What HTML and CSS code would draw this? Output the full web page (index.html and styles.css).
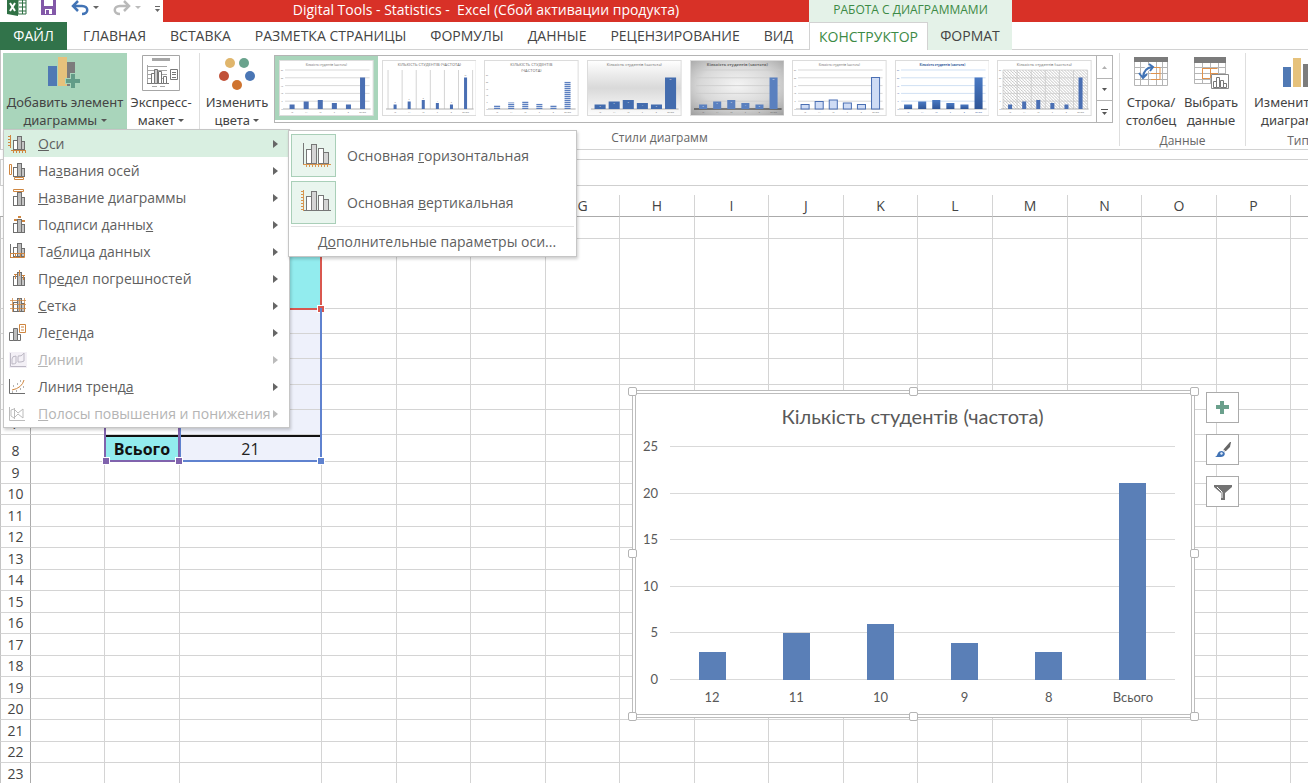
FILE: index.html
```html
<!DOCTYPE html>
<html lang="ru">
<head>
<meta charset="utf-8">
<title>Digital Tools - Statistics - Excel</title>
<link rel="stylesheet" href="styles.css">
</head>
<body>
<svg class="defs" width="0" height="0" aria-hidden="true">
  <defs>
    <g id="mini-bars">
      <rect x="6.5" y="5.5" width="4" height="9" fill="#fff" stroke="#6e6e6e"/>
      <rect x="14.5" y="6.5" width="3" height="8" fill="#c4c4c4" stroke="#6e6e6e"/>
      <rect x="10.5" y="1.500" width="4" height="13" fill="#bdbdbd" stroke="#6e6e6e"/>
    </g>
    <g id="axis-bars">
      <rect x="9.500" y="10.500" width="5" height="14" fill="#fff" stroke="#777"/>
      <rect x="14.500" y="5.500" width="5" height="19" fill="#d5d5d5" stroke="#777"/>
      <rect x="21.500" y="9.500" width="5" height="15" fill="#fff" stroke="#777"/>
      <rect x="26.500" y="13.500" width="5" height="11" fill="#d5d5d5" stroke="#777"/>
    </g>
    <linearGradient id="g-soft" x1="0" y1="0" x2="0" y2="1"><stop offset="0" stop-color="#fff"/><stop offset=".5" stop-color="#d9d9d9"/><stop offset="1" stop-color="#fdfdfd"/></linearGradient>
    <radialGradient id="g-dark" cx=".5" cy=".45" r=".8"><stop offset="0" stop-color="#f4f4f4"/><stop offset=".5" stop-color="#d8d8d8"/><stop offset="1" stop-color="#949494"/></radialGradient>
    <linearGradient id="g-bar" x1="0" y1="0" x2="0" y2="1"><stop offset="0" stop-color="#4a7ac4"/><stop offset="1" stop-color="#2f5597"/></linearGradient>
    <pattern id="p-stripe" width="4" height="2" patternUnits="userSpaceOnUse"><rect width="4" height="2" fill="#fff"/><rect width="4" height="1.300" fill="#5b7fc0"/></pattern>
    <pattern id="p-hatch" width="3" height="3" patternUnits="userSpaceOnUse"><path d="M0 0L3 3" stroke="#b2b2b2" stroke-width=".7"/></pattern>
  </defs>
</svg>

<div class="app">
  <header class="titlebar">
    <div class="quick">
      <svg class="quick-excel" viewBox="0 0 20 16" width="20" height="16" aria-hidden="true">
        <path d="M11 0h8v14h-8z" fill="#fff" stroke="#2f7044"/>
        <path d="M12 3h7M12 7h7M12 11h7M15.500 0v14" stroke="#2f7044"/>
        <path d="M0 0h11v16L0 14z" fill="#2f7044"/>
        <path d="M3 3l5 8M8 3l-5 8" stroke="#fff" stroke-width="2"/>
      </svg>
      <button class="quick-save" aria-label="Сохранить">
        <svg viewBox="0 0 15 15" width="15" height="15"><path d="M0 0h15v15H0z" fill="#8258a8"/><path d="M3 0h9v6H3zM4 9h7v5H4z" fill="#fff"/><path d="M5 10h3v4H5z" fill="#8258a8"/></svg>
      </button>
      <button class="quick-undo" aria-label="Отменить">
        <svg viewBox="0 0 28 16" width="28" height="16"><path d="M2 6h9c7 0 7 8 0 8" fill="none" stroke="#4173b5" stroke-width="2.500"/><path d="M7 1L2 6l5 5" fill="none" stroke="#4173b5" stroke-width="2.500"/><path d="M22 6h6l-3 3z" fill="#666"/></svg>
      </button>
      <button class="quick-redo" aria-label="Повторить">
        <svg viewBox="0 0 28 16" width="28" height="16"><path d="M16 6H7c-7 0-7 8 0 8" fill="none" stroke="#b9b9b9" stroke-width="2.500"/><path d="M11 1l5 5-5 5" fill="none" stroke="#b9b9b9" stroke-width="2.500"/><path d="M22 6h6l-3 3z" fill="#bbb"/></svg>
      </button>
      <button class="quick-more" aria-label="Настройка панели">
        <svg viewBox="0 0 5 6" width="5" height="6"><path d="M0 .5h5" stroke="#666"/><path d="M0 3h5L2.500 6z" fill="#666"/></svg>
      </button>
    </div>
    <div class="caption">Digital Tools - Statistics -&nbsp; Excel (Сбой активации продукта)</div>
    <div class="context-title">РАБОТА С ДИАГРАММАМИ</div>
    <div class="caption-rest"></div>
  </header>

  <nav class="tabs">
    <button class="tab-file">ФАЙЛ</button>
    <div class="tabs-main">
      <button class="tab">ГЛАВНАЯ</button>
      <button class="tab">ВСТАВКА</button>
      <button class="tab">РАЗМЕТКА СТРАНИЦЫ</button>
      <button class="tab">ФОРМУЛЫ</button>
      <button class="tab">ДАННЫЕ</button>
      <button class="tab">РЕЦЕНЗИРОВАНИЕ</button>
      <button class="tab">ВИД</button>
    </div>
    <div class="tabs-context">
      <button class="tab tab-active">КОНСТРУКТОР</button>
      <button class="tab">ФОРМАТ</button>
    </div>
  </nav>

  <section class="ribbon">
    <div class="group group-layout">
      <div class="dropdown">
        <button class="tool tool-open" aria-expanded="true">
          <svg viewBox="0 0 34 34" width="34" height="34"><path d="M0 10h9v20H0z" fill="#5079b4"/><path d="M10 1h9v29h-9z" fill="#e6c27c"/><path d="M19 6h8v24h-8z" fill="#7c7c7c"/><path d="M22 17h6v5h5v6h-5v5h-6v-5h-5v-6h5z" fill="#a9d5bb"/><path d="M23 18h4v5h5v4h-5v5h-4v-5h-5v-4h5z" fill="#639c88"/></svg>
          <span>Добавить элемент</span><span>диаграммы <i class="caret"></i></span>
        </button>
        <ul class="menu">
          <li><button class="menu-item menu-item-on"><svg viewBox="0 0 20 18" width="20" height="18"><use href="#mini-bars"/><path d="M3.500 0v13M1 1.500h2M1 4.500h2M1 7.500h2M1 10.500h2M4 15.500h15M6.500 15v3M9.500 15v3M12.500 15v3M15.500 15v3M18.500 15v3" stroke="#cf8640" fill="none"/></svg><span><u>О</u>си</span></button></li>
          <li><button class="menu-item"><svg viewBox="0 0 20 18" width="20" height="18"><use href="#mini-bars"/><path d="M2.500 2.500h2v10h-2zM7.500 15.500h9v2h-9z" stroke="#cf8640" fill="#fff"/></svg><span>На<u>з</u>вания осей</span></button></li>
          <li><button class="menu-item"><svg viewBox="0 0 20 18" width="20" height="18"><use href="#mini-bars" y="2"/><path d="M6.500.5h10v2h-10z" stroke="#cf8640" fill="#fff"/></svg><span><u>Н</u>азвание диаграммы</span></button></li>
          <li><button class="menu-item"><svg viewBox="0 0 20 18" width="20" height="18"><use href="#mini-bars" y="2"/><path d="M7 4h3M11 1h3M15 5h3" stroke="#cf8640" stroke-width="2"/></svg><span>Подписи данны<u>х</u></span></button></li>
          <li><button class="menu-item"><svg viewBox="0 0 20 18" width="20" height="18"><use href="#mini-bars" y="-1"/><path d="M3.500 1v14" stroke="#6e6e6e"/><path d="M3.500 10.500h14v4h-14zM8.500 10v4M13.500 10v4" stroke="#cf8640" fill="none"/></svg><span>Та<u>б</u>лица данных</span></button></li>
          <li><button class="menu-item"><svg viewBox="0 0 20 18" width="20" height="18"><use href="#mini-bars" y="1"/><path d="M8.500 4v5M12.500 0v6M16.500 5v5M7 4.500h3M15 5.500h3" stroke="#cf8640"/></svg><span>Пр<u>е</u>дел погрешностей</span></button></li>
          <li><button class="menu-item"><svg viewBox="0 0 20 18" width="20" height="18"><use href="#mini-bars"/><path d="M3 3.500h16M3 7.500h16M3 11.500h16M5.500 1v14M12.500 1v14M17.500 1v14" stroke="#cf8640" stroke-opacity=".75"/></svg><span><u>С</u>етка</span></button></li>
          <li><button class="menu-item"><svg viewBox="0 0 20 18" width="20" height="18"><path d="M2.500 8.500h4v8h-4zM10.500 10.500h3v6h-3z" fill="#fff" stroke="#6e6e6e"/><path d="M6.500 4.500h4v12h-4z" fill="#bdbdbd" stroke="#6e6e6e"/><path d="M12.500.5h6v8h-6zM14 3h3M14 6h3" fill="#fff" stroke="#cf8640"/></svg><span>Ле<u>г</u>енда</span></button></li>
          <li><button class="menu-item" disabled><svg viewBox="0 0 20 18" width="20" height="18"><path d="M2 1h18v16H2z" fill="#f3f0f6"/><path d="M3.500 2v13.500H19M5 13V8q0-3 4-3v7q-1 1-4 1M11 11V6q0-2 2-1 2 0 4-3v8q-2 1-4 1z" stroke="#bcb8c4" fill="none"/></svg><span><u>Л</u>инии</span></button></li>
          <li><button class="menu-item"><svg viewBox="0 0 20 18" width="20" height="18"><path d="M2.500 1v14.500H18" stroke="#6e6e6e" fill="none"/><path d="M5 12q10-2 12-10" stroke="#cf8640" fill="none"/><path d="M6 8h1M10 6h1M9 13h1M13 11h1M16 9h1M13 3h1M5 14h1" stroke="#666"/></svg><span>Линия тренд<u>а</u></span></button></li>
          <li><button class="menu-item" disabled><svg viewBox="0 0 20 18" width="20" height="18"><path d="M2.500 2v13.500H18M4 5l3-1 4 4 5-4v9l-5-4-4 4-3-2zM7.500 3v11" stroke="#bcbcbc" fill="none"/></svg><span><u>П</u>олосы повышения и понижения</span></button></li>
        </ul>
        <div class="submenu">
          <button class="sub-item"><span class="sub-icon"><svg viewBox="0 0 34 34" width="34" height="34"><use href="#axis-bars"/><path d="M6.500 4v21" stroke="#777"/><path d="M6 25.500h28M9.500 26v2M12.500 26v2M15.500 26v2M18.500 26v2M21.500 26v2M24.500 26v2M27.500 26v2M30.500 26v2" stroke="#d8954f"/></svg></span><span>Основная <u>г</u>оризонтальная</span></button>
          <button class="sub-item"><span class="sub-icon"><svg viewBox="0 0 34 34" width="34" height="34"><use href="#axis-bars"/><path d="M7 24.500h27" stroke="#777"/><path d="M6.500 4v21M4 5.500h2M4 8.500h2M4 11.500h2M4 14.500h2M4 17.500h2M4 20.500h2M4 23.500h2" stroke="#d8954f"/></svg></span><span>Основная <u>в</u>ертикальная</span></button>
          <button class="sub-more">Д<u>о</u>полнительные параметры оси...</button>
        </div>
      </div>
      <button class="tool tool-express">
        <svg viewBox="0 0 38 36" width="38" height="36"><path d="M.5.5h37v35H.5z" fill="#fff" stroke="#a6a6a6"/><path d="M10 4.500h18" stroke="#a6a6a6" stroke-width="3"/><path d="M6 11.500h19M6 15.500h19M6 19.500h19M6 23.500h19M5.500 10v19M10 31.500h5M18 31.500h5" stroke="#a6a6a6"/><path d="M5 28.500h22" stroke="#777"/><path d="M9.500 18.500h3v10h-3zM16.500 16.500h3v12h-3zM21.500 21.500h3v7h-3z" fill="#fff" stroke="#777"/><path d="M12.500 14.500h3v14h-3z" fill="#ccc" stroke="#777"/><path d="M28.500 14.500h7v10h-7zM30 17.500h4M30 19.500h4M30 22.500h4" fill="#fff" stroke="#777"/></svg>
        <span>Экспресс-</span><span>макет <i class="caret"></i></span>
      </button>
    </div>
    <div class="group group-styles">
      <div class="styles-row">
        <button class="tool tool-colors">
          <svg viewBox="0 0 36 34" width="36" height="34"><circle cx="11" cy="7" r="5" fill="#e0b66c"/><circle cx="25" cy="7" r="5" fill="#6aa38d"/><circle cx="5" cy="20" r="5" fill="#c15138"/><circle cx="31" cy="20" r="5" fill="#4a76b5"/><circle cx="18" cy="29" r="5" fill="#cf7430"/></svg>
          <span>Изменить</span><span>цвета <i class="caret"></i></span>
        </button>
        <div class="gallery">
          <div class="gallery-list" id="gallery"></div>
          <div class="gallery-nav">
            <button aria-label="Вверх"><svg viewBox="0 0 5 3" width="5" height="3"><path d="M0 3h5L2.500 0z" fill="#b0b0b0"/></svg></button>
            <button aria-label="Вниз"><svg viewBox="0 0 5 3" width="5" height="3"><path d="M0 0h5L2.500 3z" fill="#555"/></svg></button>
            <button aria-label="Все стили"><svg viewBox="0 0 7 6" width="7" height="6"><path d="M0 .5h7" stroke="#555"/><path d="M1 3h5L3.500 6z" fill="#555"/></svg></button>
          </div>
        </div>
      </div>
      <div class="group-label">Стили диаграмм</div>
    </div>
    <div class="group group-data">
      <div class="group-tools">
        <button class="tool">
          <svg viewBox="0 0 36 34" width="36" height="34"><path d="M1.500 3.500h33v26h-33zM1 11.500h34M1 17.500h34M1 23.500h34M7.500 5v25M15.500 5v25M23.500 5v25M29.500 5v25" fill="#fff" stroke="#b5b5b5"/><path d="M1 1h34v5H1z" fill="#7b7b7b"/><path d="M18 11.500h9v12h-9M18 17.500h9" fill="none" stroke="#e0924c"/><path d="M10 21q1-9 9-10" fill="none" stroke="#fff" stroke-width="5"/><path d="M10 21q1-9 9-10M16 8l4 3-3 4M6 17l4 5 4-4" fill="none" stroke="#4173b5" stroke-width="2"/></svg>
          <span>Строка/</span><span>столбец</span>
        </button>
        <button class="tool">
          <svg viewBox="0 0 36 34" width="36" height="34"><path d="M1.500 3.500h31v24h-31zM1 11.500h31M1 17.500h31M1 23.500h31M9.500 5v23M17.500 5v23M25.500 5v23" fill="#fff" stroke="#b5b5b5"/><path d="M1 1h32v6H1z" fill="#7b7b7b"/><path d="M9.500 12.500h15M9.500 12v11M17.500 12v10M9 22.500h8M17 17.500h8" fill="none" stroke="#e0924c"/><path d="M18.500 18.500h17v14h-17z" fill="#fff" stroke="#8a8a8a"/><path d="M20.500 25.500h3v6h-3zM23.500 21.500h3v10h-3zM27.500 24.500h3v7h-3zM30.500 27.500h3v4h-3z" fill="#fff" stroke="#777"/></svg>
          <span>Выбрать</span><span>данные</span>
        </button>
      </div>
      <div class="group-label">Данные</div>
    </div>
    <div class="group group-type">
      <div class="type-inner">
        <button class="tool">
          <svg viewBox="0 0 36 34" width="36" height="34"><path d="M3 11h8v20H3z" fill="#5079b4"/><path d="M13 2h8v29h-8z" fill="#e6c27c"/><path d="M23 8h8v23h-8z" fill="#7c7c7c"/></svg>
          <span>Изменить тип</span><span>диаграммы</span>
        </button>
        <div class="group-label">Тип</div>
      </div>
    </div>
  </section>

  <div class="formula-bar"></div>

  <main class="sheet">
    <table class="grid" id="grid"></table>
    <div class="range range-header"><i class="knob knob-se"></i></div>
    <div class="range range-values"><i class="knob knob-se"></i></div>
    <div class="range range-names"><i class="knob knob-sw"></i><i class="knob knob-se"></i></div>

    <figure class="chart">
      <figcaption class="chart-title">Кількість студентів (частота)</figcaption>
      <div class="chart-body">
        <div class="chart-scale"><span>25</span><span>20</span><span>15</span><span>10</span><span>5</span><span>0</span></div>
        <div class="chart-plot">
          <div class="chart-lines"><i></i><i></i><i></i><i></i><i></i><i></i></div>
          <div class="chart-bars" id="bars"></div>
        </div>
      </div>
      <div class="chart-names" id="names"></div>
      <i class="handle handle-nw"></i><i class="handle handle-n"></i><i class="handle handle-ne"></i>
      <i class="handle handle-w"></i><i class="handle handle-e"></i>
      <i class="handle handle-sw"></i><i class="handle handle-s"></i><i class="handle handle-se"></i>
    </figure>
    <div class="chart-tools">
      <button aria-label="Элементы диаграммы"><svg viewBox="0 0 18 18" width="18" height="18"><path d="M6 2h4v4h5v4h-5v5H6v-5H2V6h4z" fill="#6ba08c"/></svg></button>
      <button aria-label="Стили диаграмм"><svg viewBox="0 0 18 18" width="18" height="18"><path d="M9 9l7-8h1l-1 5-5 5z" fill="#666"/><path d="M8 8l4 3" stroke="#fff" stroke-width="1"/><path d="M1 16c2-1 2-2 3-4s4-3 6-1 0 5-3 5z" fill="#4173b5"/><path d="M6 12l2-1 1 2-2 1z" fill="#dfeaf8"/></svg></button>
      <button aria-label="Фильтры диаграммы"><svg viewBox="0 0 18 18" width="18" height="18"><path d="M0 2h18v2l-7 6v7H7v-7L0 4z" fill="#737373"/><path d="M3 4l5 5v6" stroke="#fff" fill="none"/></svg></button>
    </div>
  </main>
</div>
<script src="script.js"></script>
</body>
</html>
```

FILE: styles.css
```css
* { box-sizing: border-box; }
body { margin: 0; font-family: "Open Sans", "Noto Sans", sans-serif; font-size: 14px; color: #444; background: #fff; }
button { margin: 0; padding: 0; border: 0; background: none; font: inherit; color: inherit; }
svg { display: block; flex: none; }
.defs { position: absolute; }
.app { display: flex; flex-direction: column; height: 100vh; overflow: hidden; }

/* Title bar */
.titlebar { display: grid; grid-template-columns: 163px 646px 203px 1fr; height: 22px; flex: none; line-height: 19px; }
.quick { display: flex; align-items: flex-start; padding-left: 7px; }
.quick-save { margin-left: 14px; }
.quick-undo { margin-left: 15px; }
.quick-redo { margin-left: 14px; }
.quick-more { margin: 6px 0 0 14px; }
.caption, .caption-rest { background: #d83127; }
.caption { color: #fff; text-align: center; }
.context-title { background: #e4f2e8; color: #3c8a45; font-size: 12px; text-align: center; }

/* Tabs */
.tabs { display: grid; grid-template-columns: 67px 742px 203px 1fr; height: 28px; flex: none; border-bottom: 1px solid #d2d2d2; line-height: 26px; }
.tab-file { background: #31734a; color: #fff; }
.tabs-main { display: flex; justify-content: space-between; padding: 0 16px; }
.tabs-context { display: grid; grid-template-columns: 119px 84px; background: #e4f2e8; }
.tab { white-space: nowrap; }
.tab-active { background: #fff; color: #3c8a45; border: 1px solid #d2d2d2; border-bottom: 0; height: 28px; line-height: 24px; }

/* Ribbon */
.ribbon { display: flex; height: 100px; flex: none; padding: 3px 0 0 2px; border-bottom: 1px solid #d2d2d2; border-left: 1px solid #c4c4c4; }
.group { display: flex; flex: none; margin-bottom: 3px; border-right: 1px solid #dedede; }
.group-layout { width: 197px; }
.group-styles { flex: 1; min-width: 0; flex-direction: column; }
.group-data { width: 126px; flex-direction: column; }
.group-type { width: 62px; border-right: 0; overflow: hidden; }
.tool { display: flex; flex-direction: column; align-items: center; font: 13px/18px "Noto Sans", "Open Sans", sans-serif; white-space: nowrap; padding-top: 2px; }
.tool svg { margin-bottom: 2px; height: 36px; }
.tool-open { width: 124px; height: 77px; background: #a9d5bb; }
.tool-express { width: 68px; height: 77px; }
.tool-colors { width: 74px; height: 77px; }
.caret { display: inline-block; border: 3px solid transparent; border-top-color: #555; border-bottom: 0; vertical-align: 3px; }
.group-label { font-size: 12px; line-height: 16px; color: #666; text-align: center; }
.group-tools { display: grid; grid-template-columns: 58px 62px; height: 80px; padding-left: 2px; }
.group-tools .tool, .type-inner .tool { height: 80px; }
.type-inner { width: 104px; flex: none; }
.type-inner .tool { width: 104px; }
.styles-row { display: flex; height: 80px; padding-right: 6px; }
.gallery { display: flex; flex: 1; min-width: 0; height: 68px; margin-top: 2px; border: 1px solid #b4b4b4; }
.gallery-list { display: flex; flex: 1; min-width: 0; }
.thumb { flex: 1; min-width: 0; height: 64px; border: 4px solid transparent; }
.thumb-on { border-color: #a9d5bb; background: #a9d5bb; }
.thumb svg { width: 100%; height: 100%; }
.gallery-nav { width: 16px; display: grid; grid-template-rows: 1fr 1fr 1fr; border-left: 1px solid #b4b4b4; }
.gallery-nav button { display: flex; align-items: center; justify-content: center; }
.gallery-nav button + button { border-top: 1px solid #b4b4b4; }

/* Menus */
.dropdown { position: relative; }
.menu { position: absolute; z-index: 5; left: 0; top: 76px; width: 287px; margin: 0; padding: 0; list-style: none; background: #fff; border: 1px solid #c6c6c6; box-shadow: 1px 2px 3px rgba(0, 0, 0, .2); color: #5f5f5f; }
.menu-item { display: flex; align-items: center; width: 100%; height: 27px; padding: 0 11px 0 3px; white-space: nowrap; text-align: left; }
.menu-item svg { margin-right: 11px; }
.menu-item::after { content: ""; margin-left: auto; border: 4px solid transparent; border-left: 5px solid #666; border-right: 0; }
.menu-item-on { background: #d9efe1; }
.menu-item:disabled { color: #b4b4b4; }
.menu-item:disabled::after { border-left-color: #bbb; }
.submenu { position: absolute; z-index: 6; left: 285px; top: 77px; width: 289px; padding: 1px 2px; background: #fff; border: 1px solid #c6c6c6; box-shadow: 1px 2px 3px rgba(0, 0, 0, .2); color: #5f5f5f; }
.sub-item { display: flex; align-items: center; gap: 11px; height: 47px; white-space: nowrap; }
.sub-icon { display: flex; align-items: center; justify-content: center; width: 45px; height: 43px; background: #e9f5ee; border: 1px solid #a9cfb8; }
.sub-more { width: 100%; height: 29px; padding-left: 9px; border-top: 1px solid #e2e2e2; white-space: nowrap; }

.formula-bar { height: 27px; flex: none; margin-top: 9px; border: 1px solid #cfcfcf; border-right: 0; }

/* Sheet */
.sheet { position: relative; flex: 1; min-height: 0; overflow: hidden; padding-top: 9px; }
.grid { table-layout: fixed; width: 1365px; border-spacing: 0; }
.col-head { width: 31px; }
.col-narrow { width: 74px; }
.col-std { width: 75px; }
.col-wide { width: 142px; }
.grid th, .grid td { padding: 0; border-right: 1px solid #d4d4d4; border-bottom: 1px solid #d4d4d4; font-weight: 400; line-height: 20px; text-align: center; overflow: hidden; }
.grid thead th { border-bottom-color: #ababab; }
.grid tbody th { border-right-color: #ababab; border-left: 1px solid #c4c4c4; vertical-align: bottom; }
.row-a { height: 22px; }
.row-b { height: 21px; }
.row-25 { height: 25px; }
.row-26 { height: 26px; }
.row-27 { height: 27px; }
.row-70 { height: 70px; }
.grid .cell-cyan { background: #92ecee; }
.grid .cell-range { background: #eef1fb; }
.grid .cell-sum { border-top: 2px solid #111; font-size: 16px; color: #222; }
.grid .cell-bold { font-weight: 700; color: #111; }
.range { position: absolute; border: 2px solid; }
.range-header { left: 179px; top: 52px; width: 143px; height: 72px; color: #d9574f; }
.range-values { left: 179px; top: 122px; width: 143px; height: 154px; color: #5f82cf; border-top: 0; }
.range-names { left: 104px; top: 122px; width: 76px; height: 154px; color: #8063ad; border-top: 0; }
.knob { position: absolute; bottom: -4px; width: 6px; height: 6px; background: currentColor; outline: 1px solid #fff; }
.knob-se { right: -4px; }
.knob-sw { left: -3px; }

/* Chart */
.chart { position: absolute; left: 632px; top: 204px; width: 563px; height: 328px; margin: 0; padding: 10px 16px 0 6px; background: #fff; border: 4px double #bdbdbd; font-family: Lato, "Noto Sans", sans-serif; color: #595959; }
.chart-title { font-size: 20px; line-height: 24px; text-align: center; padding-left: 8px; }
.chart-body { display: flex; height: 247px; margin-top: 11px; }
.chart-scale { display: flex; flex-direction: column; justify-content: space-between; width: 16px; font-size: 13px; line-height: 14px; text-align: right; }
.chart-plot { position: relative; flex: 1; margin: 7px 0 6px 12px; }
.chart-lines { display: flex; flex-direction: column; justify-content: space-between; height: 100%; }
.chart-lines i { border-top: 1px solid #d9d9d9; }
.chart-bars { position: absolute; inset: 0; display: flex; align-items: flex-end; }
.bar-slot { flex: 1; height: 100%; display: flex; align-items: flex-end; justify-content: center; }
.bar { width: 27px; background: #5a7fb7; }
.chart-names { display: flex; padding-left: 28px; margin-top: 3px; font-size: 13px; line-height: 16px; text-align: center; }
.chart-names span { flex: 1; }
.handle { position: absolute; width: 9px; height: 9px; background: #fff; border: 1px solid #b4b4b4; border-radius: 2px; }
.handle-nw, .handle-n, .handle-ne { top: -7px; }
.handle-sw, .handle-s, .handle-se { bottom: -7px; }
.handle-nw, .handle-w, .handle-sw { left: -8px; }
.handle-ne, .handle-e, .handle-se { right: -8px; }
.handle-n, .handle-s { left: calc(50% - 5px); }
.handle-w, .handle-e { top: calc(50% - 5px); }
.chart-tools { position: absolute; left: 1206px; top: 206px; display: grid; gap: 11px; }
.chart-tools button { display: flex; align-items: center; justify-content: center; width: 33px; height: 31px; background: #fff; border: 1px solid #ababab; }
```

FILE: script.js
```js
const data = [["12", 3], ["11", 5], ["10", 6], ["9", 4], ["8", 3], ["Всього", 21]];

// Spreadsheet grid
const letters = "ABCDEFGHIJKLMNOPQ".split("");
const widths = ["narrow", "std", "wide", "std", "narrow", "std", "narrow", "std", "narrow", "std", "narrow", "std", "std", "narrow", "std", "narrow", "std"];
const heights = { 1: "a", 2: "70", 3: "25", 4: "25", 5: "26", 6: "25", 7: "25", 8: "27" };
let html = '<colgroup><col class="col-head">' + widths.map(w => `<col class="col-${w}">`).join("") + "</colgroup>";
html += '<thead><tr class="row-a"><th></th>' + letters.map(l => `<th>${l}</th>`).join("") + "</tr></thead><tbody>";
for (let r = 1; r <= 23; r++) {
  html += `<tr class="row-${heights[r] || (r % 2 ? "a" : "b")}"><th>${r}</th>`;
  for (const l of letters) {
    let cls = "", text = "";
    if (l === "C" && r === 2) cls = "cell-cyan";
    if (l === "C" && r > 2 && r < 9) cls = "cell-range";
    if (l === "C" && r === 8) { cls += " cell-sum"; text = "21"; }
    if (l === "B" && r === 8) { cls = "cell-cyan cell-sum cell-bold"; text = "Всього"; }
    html += `<td class="${cls}">${text}</td>`;
  }
  html += "</tr>";
}
document.getElementById("grid").innerHTML = html + "</tbody>";

// Main chart
document.getElementById("bars").innerHTML = data.map(d => `<div class="bar-slot"><div class="bar" style="height:${d[1] * 4}%"></div></div>`).join("");
document.getElementById("names").innerHTML = data.map(d => `<span>${d[0]}</span>`).join("");

// Style gallery
const title = "Кількість студентів (частота)";
const styles = [
  { w: 5, h: 1, fill: "#4a6fb3" },
  { w: 3, v: 1, fill: "#4a6fb3", caps: 1, val: "#666" },
  { w: 6, fill: "url(#p-stripe)", caps: 2, scale: 1.3 },
  { w: 11, bg: "url(#g-soft)", fill: "#436cae", val: "#fff", noY: 1, size: 4 },
  { w: 8, h: 1, bg: "url(#g-dark)", fill: "#5a80bf", val: "#fff", noY: 1, bold: 1, size: 4, axis: "#222" },
  { w: 8, h: 1, fill: "#cfdcf5", stroke: "#4a6fb3" },
  { w: 8, h: 1, fill: "url(#g-bar)", line: "#bcd3ee", bold: 1, ink: "#2f5597" },
  { w: 4, h: 1, v: 1, bg2: "url(#p-hatch)", fill: "#4a6fb3", size: 4 }
];
function thumb(s) {
  const line = s.line || "#c9c9c9", ink = s.ink || "#666", k = s.scale || 1.5;
  let o = `<svg viewBox="0 0 94 56" preserveAspectRatio="none"><rect x=".5" y=".5" width="93" height="55" fill="${s.bg || "#fff"}" stroke="#dcdcdc"/>`;
  if (s.bg2) o += `<rect x="6" y="10" width="84" height="39" fill="${s.bg2}"/>`;
  if (s.h) for (let i = 0; i < 5; i++) o += `<path d="M6 ${10 + i * 7.8}H90" stroke="${line}" stroke-width=".7"/>`;
  if (s.v) for (let i = 0; i < 7; i++) o += `<path d="M${6 + i * 14} 10V49" stroke="${line}" stroke-width=".8"/>`;
  o += `<path d="M4 49H91" stroke="${s.axis || "#b0b0b0"}"/>`;
  const t = (x, y, str, size, c, b) => `<text x="${x}" y="${y}" font-size="${size}" fill="${c}" text-anchor="middle"${b ? ' font-weight="700"' : ""}>${str}</text>`;
  if (s.caps === 2) o += t(47, 6, "КІЛЬКІСТЬ СТУДЕНТІВ", 4, ink) + t(47, 12, "(ЧАСТОТА)", 4, ink);
  else o += t(47, 6, s.caps ? title.toUpperCase() : title, s.caps ? 4 : s.size || 3, ink, s.bold);
  data.forEach(([name, n], i) => {
    const x = 13 + i * 14, y = 49 - n * k;
    o += `<rect x="${x - s.w / 2}" y="${y}" width="${s.w}" height="${n * k}" fill="${s.fill}" ${s.stroke ? `stroke="${s.stroke}"` : ""}/>`;
    if (s.val) o += t(x, s.val === "#fff" ? y + 3 : y - 1, n, 2, s.val);
    o += t(x, 53, name, 2, ink);
  });
  if (!s.noY && s.w !== 3) for (let i = 0; i < 6; i++) o += t(3, 50 - i * 7.8 * k / 1.5, i * 5, 2, ink);
  return o + "</svg>";
}
document.getElementById("gallery").innerHTML = styles.map((s, i) => `<button class="thumb${i ? "" : " thumb-on"}" aria-label="Стиль ${i + 1}">${thumb(s)}</button>`).join("");
```
